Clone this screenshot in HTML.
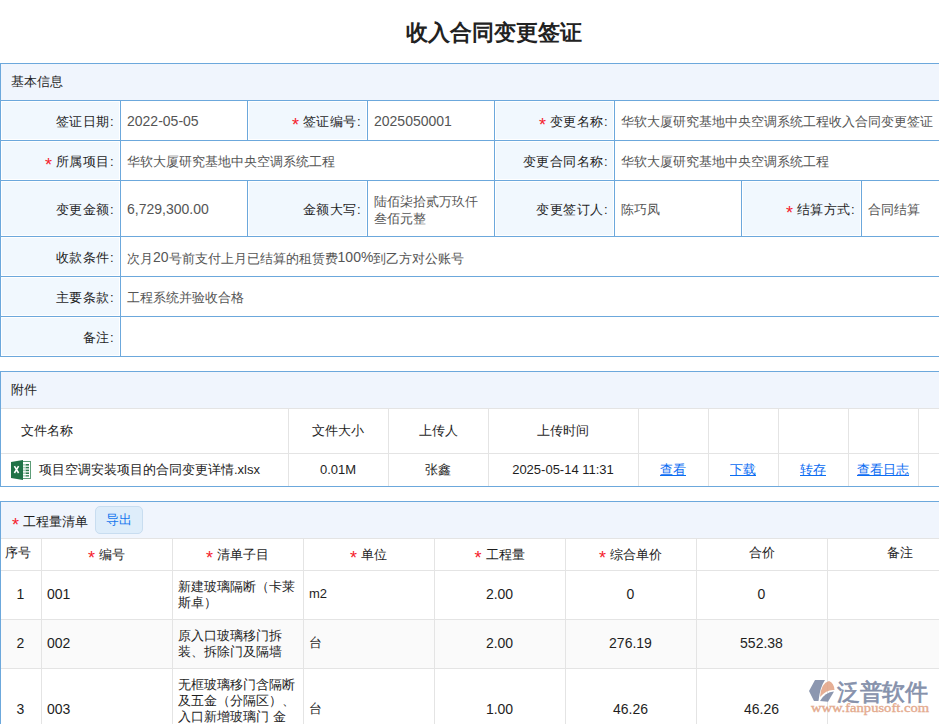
<!DOCTYPE html>
<html><head><meta charset="utf-8"><title>收入合同变更签证</title>
<style>
html,body{margin:0;padding:0;background:#fff;}
body{width:939px;height:724px;overflow:hidden;position:relative;font-family:"Liberation Sans",sans-serif;font-size:13px;color:#333;}
body>div{position:absolute;}
.t{position:absolute;white-space:nowrap;line-height:16px;}
.c{text-align:center;}
.title{font-size:22px;font-weight:bold;color:#222;line-height:30px;}
.lb{color:#1e1e1e;}
.L{letter-spacing:.5px;}
.val{color:#555;}
.lk{color:#0a6cf2;text-decoration:underline;}
.s{font-style:normal;color:#f5222d;display:inline-block;width:11px;text-align:left;font-size:18px;line-height:10px;position:relative;top:5px;letter-spacing:0;}
.a{font-weight:normal;font-size:14px;}
.n13 .a{font-size:13px;}
.val .a{position:relative;top:-1px;}
.btn{position:absolute;background:#deedfa;border:1px solid #c8ddf0;border-radius:5px;color:#1577ee;text-align:center;line-height:26px;font-size:13px;}
</style></head><body>
<span class="t title" style="left:0;width:988px;top:18px;text-align:center;">收入合同变更签证</span>
<div style="left:0px;top:64px;width:988px;height:36px;background:#f0f5fd;"></div>
<div style="left:2px;top:102px;width:117px;height:37px;background:#f1f8fe;"></div>
<div style="left:249px;top:102px;width:117px;height:37px;background:#f1f8fe;"></div>
<div style="left:496px;top:102px;width:117px;height:37px;background:#f1f8fe;"></div>
<div style="left:2px;top:142px;width:117px;height:37px;background:#f1f8fe;"></div>
<div style="left:496px;top:142px;width:117px;height:37px;background:#f1f8fe;"></div>
<div style="left:2px;top:182px;width:117px;height:53px;background:#f1f8fe;"></div>
<div style="left:249px;top:182px;width:117px;height:53px;background:#f1f8fe;"></div>
<div style="left:496px;top:182px;width:117px;height:53px;background:#f1f8fe;"></div>
<div style="left:743px;top:182px;width:117px;height:53px;background:#f1f8fe;"></div>
<div style="left:2px;top:238px;width:117px;height:37px;background:#f1f8fe;"></div>
<div style="left:2px;top:278px;width:117px;height:37px;background:#f1f8fe;"></div>
<div style="left:2px;top:318px;width:117px;height:37px;background:#f1f8fe;"></div>
<div style="left:0px;top:63px;width:988px;height:1px;background:#6ca8dc;"></div>
<div style="left:0px;top:100px;width:988px;height:1px;background:#6ca8dc;"></div>
<div style="left:0px;top:140px;width:988px;height:1px;background:#6ca8dc;"></div>
<div style="left:0px;top:180px;width:988px;height:1px;background:#6ca8dc;"></div>
<div style="left:0px;top:236px;width:988px;height:1px;background:#6ca8dc;"></div>
<div style="left:0px;top:276px;width:988px;height:1px;background:#6ca8dc;"></div>
<div style="left:0px;top:316px;width:988px;height:1px;background:#6ca8dc;"></div>
<div style="left:0px;top:356px;width:988px;height:1px;background:#6ca8dc;"></div>
<div style="left:0px;top:63px;width:1px;height:294px;background:#6ca8dc;"></div>
<div style="left:120px;top:100px;width:1px;height:40px;background:#6ca8dc;"></div>
<div style="left:247px;top:100px;width:1px;height:40px;background:#6ca8dc;"></div>
<div style="left:367px;top:100px;width:1px;height:40px;background:#6ca8dc;"></div>
<div style="left:494px;top:100px;width:1px;height:40px;background:#6ca8dc;"></div>
<div style="left:614px;top:100px;width:1px;height:40px;background:#6ca8dc;"></div>
<div style="left:120px;top:140px;width:1px;height:40px;background:#6ca8dc;"></div>
<div style="left:494px;top:140px;width:1px;height:40px;background:#6ca8dc;"></div>
<div style="left:614px;top:140px;width:1px;height:40px;background:#6ca8dc;"></div>
<div style="left:120px;top:180px;width:1px;height:56px;background:#6ca8dc;"></div>
<div style="left:247px;top:180px;width:1px;height:56px;background:#6ca8dc;"></div>
<div style="left:367px;top:180px;width:1px;height:56px;background:#6ca8dc;"></div>
<div style="left:494px;top:180px;width:1px;height:56px;background:#6ca8dc;"></div>
<div style="left:614px;top:180px;width:1px;height:56px;background:#6ca8dc;"></div>
<div style="left:741px;top:180px;width:1px;height:56px;background:#6ca8dc;"></div>
<div style="left:861px;top:180px;width:1px;height:56px;background:#6ca8dc;"></div>
<div style="left:120px;top:236px;width:1px;height:40px;background:#6ca8dc;"></div>
<div style="left:120px;top:276px;width:1px;height:40px;background:#6ca8dc;"></div>
<div style="left:120px;top:316px;width:1px;height:40px;background:#6ca8dc;"></div>
<span class="t lb" style="left:11px;top:74px;">基本信息</span>
<span class="t lb L" style="right:825px;top:114px;text-align:right;">签证日期:</span>
<span class="t val" style="left:127px;top:114px;"><b class="a">2022-05-05</b></span>
<span class="t lb L" style="right:578px;top:114px;text-align:right;"><i class="s">*</i>签证编号:</span>
<span class="t val" style="left:374px;top:114px;"><b class="a">2025050001</b></span>
<span class="t lb L" style="right:331px;top:114px;text-align:right;"><i class="s">*</i>变更名称:</span>
<span class="t val" style="left:621px;top:114px;">华软大厦研究基地中央空调系统工程收入合同变更签证</span>
<span class="t lb L" style="right:825px;top:154px;text-align:right;"><i class="s">*</i>所属项目:</span>
<span class="t val" style="left:127px;top:154px;">华软大厦研究基地中央空调系统工程</span>
<span class="t lb L" style="right:331px;top:154px;text-align:right;">变更合同名称:</span>
<span class="t val" style="left:621px;top:154px;">华软大厦研究基地中央空调系统工程</span>
<span class="t lb L" style="right:825px;top:202px;text-align:right;">变更金额:</span>
<span class="t val" style="left:127px;top:202px;"><b class="a">6,729,300.00</b></span>
<span class="t lb L" style="right:578px;top:202px;text-align:right;">金额大写:</span>
<span class="t val" style="left:374px;top:194px;line-height:17px;margin-top:-1px;">陆佰柒拾贰万玖仟<br>叁佰元整</span>
<span class="t lb L" style="right:331px;top:202px;text-align:right;">变更签订人:</span>
<span class="t val" style="left:621px;top:202px;">陈巧凤</span>
<span class="t lb L" style="right:84px;top:202px;text-align:right;"><i class="s">*</i>结算方式:</span>
<span class="t val" style="left:868px;top:202px;">合同结算</span>
<span class="t lb L" style="right:825px;top:250px;text-align:right;">收款条件:</span>
<span class="t val" style="left:127px;top:250px;">次月<b class="a">20</b>号前支付上月已结算的租赁费<b class="a">100%</b>到乙方对公账号</span>
<span class="t lb L" style="right:825px;top:290px;text-align:right;">主要条款:</span>
<span class="t val" style="left:127px;top:290px;">工程系统并验收合格</span>
<span class="t lb L" style="right:825px;top:330px;text-align:right;">备注:</span>
<div style="left:0px;top:372px;width:988px;height:36px;background:#f0f5fd;"></div>
<div style="left:0px;top:371px;width:988px;height:1px;background:#6ca8dc;"></div>
<div style="left:0px;top:371px;width:1px;height:116px;background:#6ca8dc;"></div>
<span class="t lb" style="left:11px;top:382px;">附件</span>
<div style="left:1px;top:408px;width:988px;height:1px;background:#e4e4e4;"></div>
<div style="left:1px;top:453px;width:988px;height:1px;background:#e4e4e4;"></div>
<div style="left:0px;top:486px;width:988px;height:1px;background:#6ca8dc;"></div>
<div style="left:288px;top:409px;width:1px;height:77px;background:#e4e4e4;"></div>
<div style="left:388px;top:409px;width:1px;height:77px;background:#e4e4e4;"></div>
<div style="left:488px;top:409px;width:1px;height:77px;background:#e4e4e4;"></div>
<div style="left:638px;top:409px;width:1px;height:77px;background:#e4e4e4;"></div>
<div style="left:708px;top:409px;width:1px;height:77px;background:#e4e4e4;"></div>
<div style="left:778px;top:409px;width:1px;height:77px;background:#e4e4e4;"></div>
<div style="left:848px;top:409px;width:1px;height:77px;background:#e4e4e4;"></div>
<div style="left:918px;top:409px;width:1px;height:77px;background:#e4e4e4;"></div>
<span class="t lb" style="left:21px;top:423px;">文件名称</span>
<span class="t c lb" style="left:288px;width:100px;top:423px;">文件大小</span>
<span class="t c lb" style="left:388px;width:100px;top:423px;">上传人</span>
<span class="t c lb" style="left:488px;width:150px;top:423px;">上传时间</span>
<svg style="position:absolute;left:11px;top:459px" width="21" height="22" viewBox="0 0 21 22">
<rect x="11.5" y="2.5" width="8" height="17" fill="#fff" stroke="#5e9d78" stroke-width="1"/>
<g fill="#2f7d4f"><rect x="14.5" y="5" width="3.5" height="1.6"/><rect x="14.5" y="7.8" width="3.5" height="1.6"/><rect x="14.5" y="10.6" width="3.5" height="1.6"/><rect x="14.5" y="13.4" width="3.5" height="1.6"/><rect x="14.5" y="16.2" width="3.5" height="1.3"/></g>
<g fill="#a9cfb8"><rect x="12" y="5" width="2.5" height="1.6"/><rect x="12" y="7.8" width="2.5" height="1.6"/><rect x="12" y="10.6" width="2.5" height="1.6"/><rect x="12" y="13.4" width="2.5" height="1.6"/><rect x="12" y="16.2" width="2.5" height="1.3"/></g>
<path d="M0 3 L12 1 L12 21 L0 19 Z" fill="#1f7246"/>
<path d="M3.4 7.2 L7.6 14 M7.6 7.2 L3.4 14" stroke="#fff" stroke-width="1.6"/>
</svg>
<span class="t lb n13" style="left:39px;top:462px;">项目空调安装项目的合同变更详情<b class="a">.xlsx</b></span>
<span class="t c lb n13" style="left:288px;width:100px;top:462px;"><b class="a">0.01M</b></span>
<span class="t c lb" style="left:388px;width:100px;top:462px;">张鑫</span>
<span class="t c lb n13" style="left:488px;width:150px;top:462px;"><b class="a">2025-05-14 11:31</b></span>
<span class="t c lk" style="left:638px;width:70px;top:462px;">查看</span>
<span class="t c lk" style="left:708px;width:70px;top:462px;">下载</span>
<span class="t c lk" style="left:778px;width:70px;top:462px;">转存</span>
<span class="t c lk" style="left:848px;width:70px;top:462px;">查看日志</span>
<div style="left:0px;top:502px;width:988px;height:36px;background:#f0f5fd;"></div>
<div style="left:0px;top:501px;width:988px;height:1px;background:#6ca8dc;"></div>
<div style="left:0px;top:501px;width:1px;height:223px;background:#6ca8dc;"></div>
<span class="t lb" style="left:12px;top:514px;"><i class="s">*</i>工程量清单</span>
<div class="btn" style="left:95px;top:506px;width:46px;height:26px;">导出</div>
<div style="left:1px;top:538px;width:988px;height:1px;background:#e4e4e4;"></div>
<div style="left:1px;top:570px;width:988px;height:1px;background:#e4e4e4;"></div>
<div style="left:1px;top:620px;width:988px;height:48px;background:#fafafa;"></div>
<div style="left:1px;top:619px;width:988px;height:1px;background:#e4e4e4;"></div>
<div style="left:1px;top:668px;width:988px;height:1px;background:#e4e4e4;"></div>
<div style="left:41px;top:539px;width:1px;height:186px;background:#e4e4e4;"></div>
<div style="left:172px;top:539px;width:1px;height:186px;background:#e4e4e4;"></div>
<div style="left:303px;top:539px;width:1px;height:186px;background:#e4e4e4;"></div>
<div style="left:434px;top:539px;width:1px;height:186px;background:#e4e4e4;"></div>
<div style="left:565px;top:539px;width:1px;height:186px;background:#e4e4e4;"></div>
<div style="left:696px;top:539px;width:1px;height:186px;background:#e4e4e4;"></div>
<div style="left:827px;top:539px;width:1px;height:186px;background:#e4e4e4;"></div>
<span class="t lb" style="left:5px;top:545px;">序号</span>
<span class="t c lb" style="left:41px;width:131px;top:547px;"><i class="s">*</i>编号</span>
<span class="t c lb" style="left:172px;width:131px;top:547px;"><i class="s">*</i>清单子目</span>
<span class="t c lb" style="left:303px;width:131px;top:547px;"><i class="s">*</i>单位</span>
<span class="t c lb" style="left:434px;width:131px;top:547px;"><i class="s">*</i>工程量</span>
<span class="t c lb" style="left:565px;width:131px;top:547px;"><i class="s">*</i>综合单价</span>
<span class="t c lb" style="left:696px;width:131px;top:545px;">合价</span>
<span class="t c lb" style="left:827px;width:146px;top:545px;">备注</span>
<span class="t c lb" style="left:0px;width:41px;top:586px;"><b class="a">1</b></span>
<span class="t lb" style="left:47px;top:586px;"><b class="a">001</b></span>
<span class="t lb" style="left:178px;top:579px;line-height:16px;">新建玻璃隔断（卡莱<br>斯卓）</span>
<span class="t lb n13" style="left:309px;top:586px;"><b class="a">m2</b></span>
<span class="t c lb" style="left:434px;width:131px;top:586px;"><b class="a">2.00</b></span>
<span class="t c lb" style="left:565px;width:131px;top:586px;"><b class="a">0</b></span>
<span class="t c lb" style="left:696px;width:131px;top:586px;"><b class="a">0</b></span>
<span class="t c lb" style="left:0px;width:41px;top:635px;"><b class="a">2</b></span>
<span class="t lb" style="left:47px;top:635px;"><b class="a">002</b></span>
<span class="t lb" style="left:178px;top:628px;line-height:16px;">原入口玻璃移门拆<br>装、拆除门及隔墙</span>
<span class="t lb n13" style="left:309px;top:635px;">台</span>
<span class="t c lb" style="left:434px;width:131px;top:635px;"><b class="a">2.00</b></span>
<span class="t c lb" style="left:565px;width:131px;top:635px;"><b class="a">276.19</b></span>
<span class="t c lb" style="left:696px;width:131px;top:635px;"><b class="a">552.38</b></span>
<span class="t c lb" style="left:0px;width:41px;top:701px;"><b class="a">3</b></span>
<span class="t lb" style="left:47px;top:701px;"><b class="a">003</b></span>
<span class="t lb" style="left:178px;top:677px;line-height:16px;">无框玻璃移门含隔断<br>及五金（分隔区）、<br>入口新增玻璃门 金</span>
<span class="t lb n13" style="left:309px;top:701px;">台</span>
<span class="t c lb" style="left:434px;width:131px;top:701px;"><b class="a">1.00</b></span>
<span class="t c lb" style="left:565px;width:131px;top:701px;"><b class="a">46.26</b></span>
<span class="t c lb" style="left:696px;width:131px;top:701px;"><b class="a">46.26</b></span>
<svg style="position:absolute;left:805px;top:675px" width="134" height="45" viewBox="0 0 134 45">
<g opacity="0.85">
<path d="M10 5 L20 5 Q15 12 13.5 26 L9 26 L4 16 Z" fill="#7986a3"/>
<path d="M15 22 Q16 8 24 6 Q29 8 29.5 15 Q22 14 15 22 Z" fill="#e2a283"/>
<path d="M15 26 Q20 17 29 16.5 L23 26.8 Z" fill="#7986a3"/>
</g>
<text x="32" y="25" font-family="Liberation Sans, sans-serif" font-size="23" fill="#7986a3" stroke="#7986a3" stroke-width="0.7" opacity="0.9" textLength="91">泛普软件</text>
<text x="6" y="37" font-family="Liberation Serif, serif" font-size="12" fill="#e2a283" stroke="#e2a283" stroke-width="0.35" opacity="0.9" textLength="118" lengthAdjust="spacingAndGlyphs">www.fanpusoft.com</text>
</svg>
</body></html>
